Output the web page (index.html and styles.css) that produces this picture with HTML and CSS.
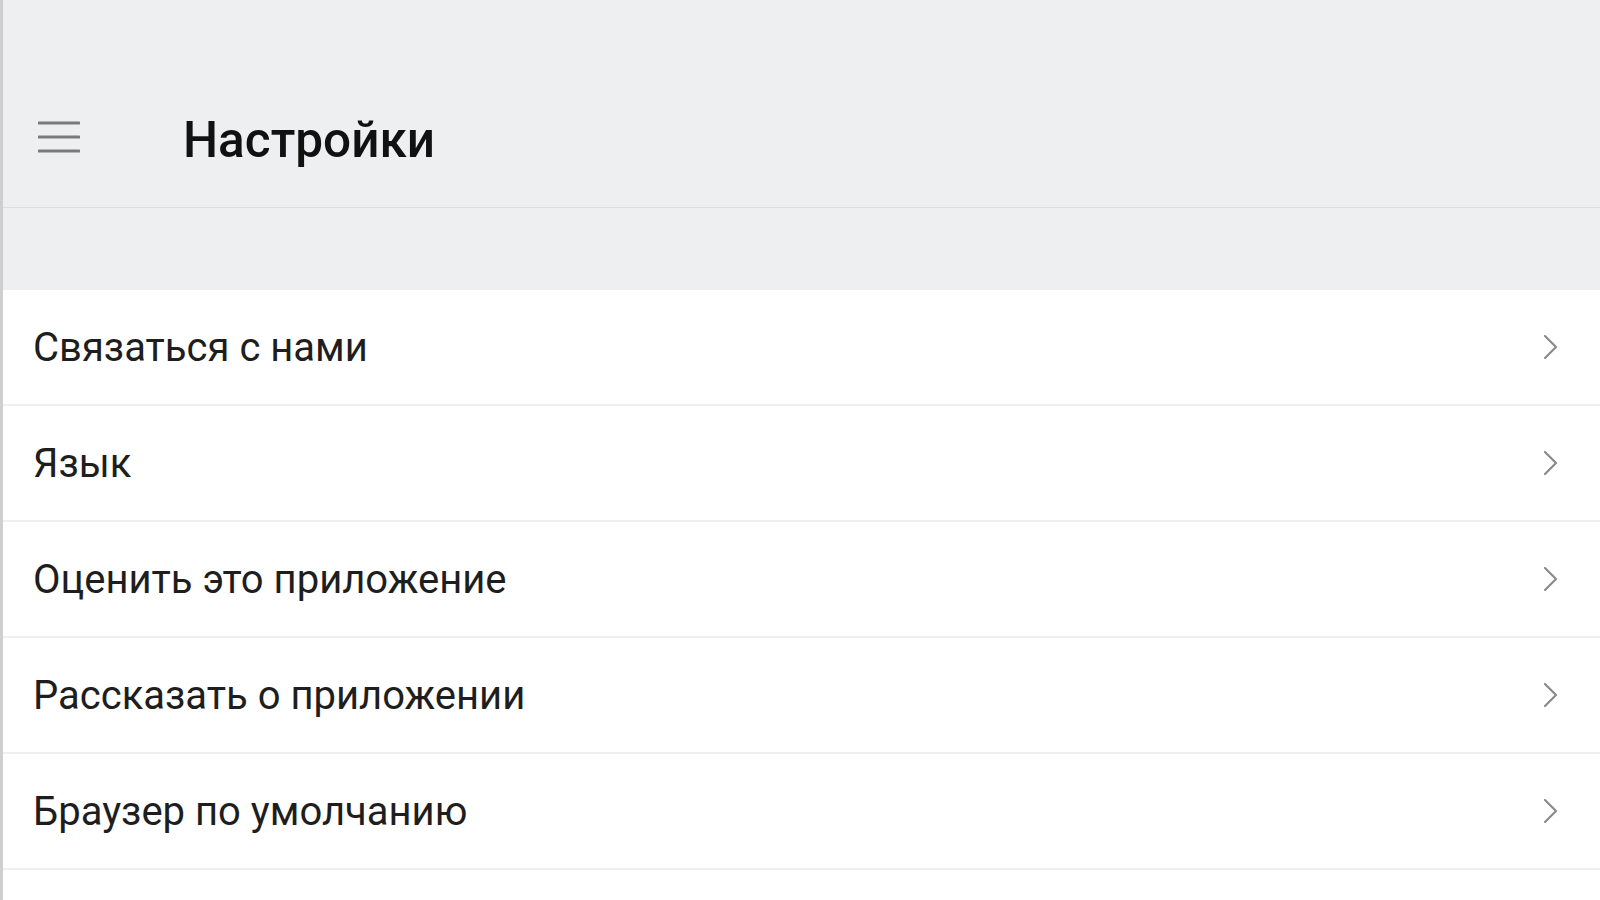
FILE: index.html
```html
<!DOCTYPE html>
<html lang="ru">
<head>
<meta charset="utf-8">
<title>Настройки</title>
<link rel="stylesheet" href="styles.css">
</head>
<body>
<div class="frame">
  <header class="appbar">
    <div class="toolbar">
      <button class="menu-btn" aria-label="Меню">
        <svg width="42" height="34" viewBox="0 0 42 34">
          <line x1="1" y1="3" x2="41" y2="3" />
          <line x1="1" y1="17" x2="41" y2="17" />
          <line x1="1" y1="31" x2="41" y2="31" />
        </svg>
      </button>
      <h1 class="title">Настройки</h1>
    </div>
  </header>
  <div class="gap"></div>
  <ul class="list">
    <li class="row"><span class="label">Связаться с нами</span><svg class="chev" width="16" height="26" viewBox="0 0 16 26"><polyline points="3,2 14,13 3,24"/></svg></li>
    <li class="row"><span class="label">Язык</span><svg class="chev" width="16" height="26" viewBox="0 0 16 26"><polyline points="3,2 14,13 3,24"/></svg></li>
    <li class="row"><span class="label">Оценить это приложение</span><svg class="chev" width="16" height="26" viewBox="0 0 16 26"><polyline points="3,2 14,13 3,24"/></svg></li>
    <li class="row"><span class="label">Рассказать о приложении</span><svg class="chev" width="16" height="26" viewBox="0 0 16 26"><polyline points="3,2 14,13 3,24"/></svg></li>
    <li class="row"><span class="label">Браузер по умолчанию</span><svg class="chev" width="16" height="26" viewBox="0 0 16 26"><polyline points="3,2 14,13 3,24"/></svg></li>
    <li class="row empty"></li>
  </ul>
</div>
</body>
</html>
```

FILE: styles.css
```css
html, body {
  margin: 0;
  padding: 0;
  height: 100%;
  background: #ffffff;
  overflow: hidden;
}

body {
  font-family: Roboto, "Noto Sans", "Liberation Sans", sans-serif;
  color: #1a1a1a;
}

.frame {
  height: 900px;
  border-left: 3px solid #cfcfcf;
  display: flex;
  flex-direction: column;
  background: #ffffff;
  overflow: hidden;
}

.appbar {
  flex-shrink: 0;
  background: #eeeff1;
  height: 208px;
  border-bottom: 1px solid #dcdddf;
  box-sizing: border-box;
  padding-top: 72px;
  display: flex;
  flex-direction: column;
}

.toolbar {
  flex: 1;
  display: flex;
  align-items: center;
}

.menu-btn {
  margin-left: 35px;
  margin-bottom: 5px;
  width: 42px;
  height: 34px;
  padding: 0;
  border: 0;
  background: transparent;
  display: flex;
}

.menu-btn line {
  stroke: #7a7a7a;
  stroke-width: 3;
  stroke-linecap: round;
}

.title {
  margin: 0 0 0 103px;
  font-size: 49.5px;
  font-weight: 500;
  color: #111111;
}

.gap {
  flex-shrink: 0;
  height: 82px;
  background: #eeeff1;
}

.list {
  list-style: none;
  margin: 0;
  padding: 0;
  flex-shrink: 0;
}

.row {
  height: 114px;
  border-bottom: 2px solid #f0f0f0;
  display: flex;
  align-items: center;
  justify-content: space-between;
  padding: 0 42px 0 30px;
}

.row.empty {
  border-bottom: 0;
}

.label {
  font-size: 40px;
  color: #1e1e1e;
}

.chev polyline {
  fill: none;
  stroke: #8a8a8a;
  stroke-width: 2.2;
  stroke-linecap: round;
  stroke-linejoin: round;
}
```
